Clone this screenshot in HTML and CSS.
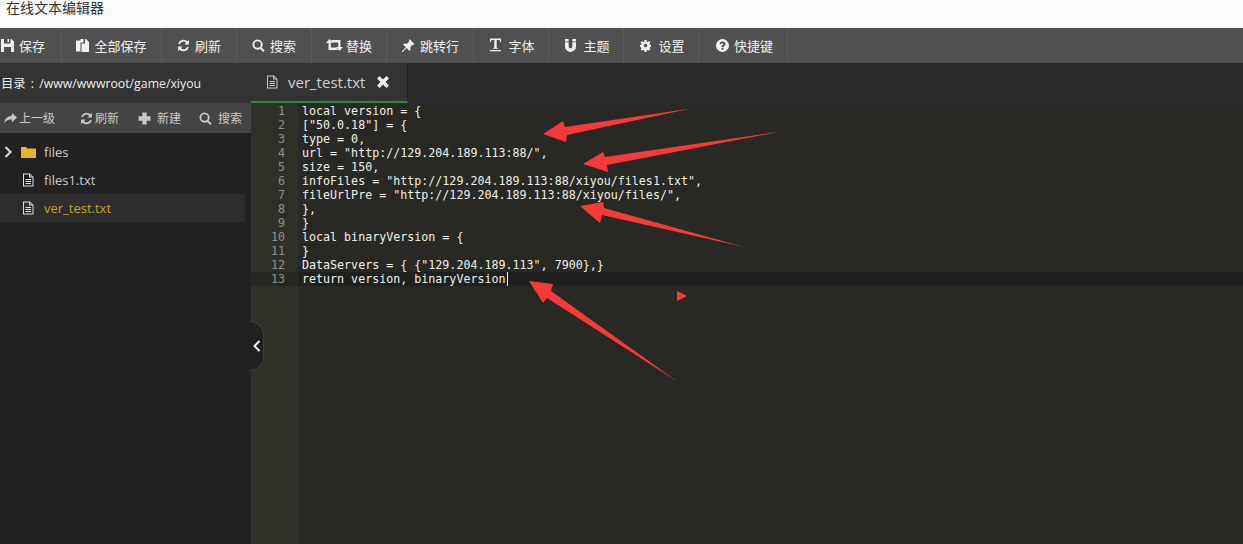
FILE: index.html
```html
<!DOCTYPE html>
<html lang="zh-CN">
<head>
<meta charset="utf-8">
<title>在线文本编辑器</title>
<link rel="stylesheet" href="styles.css">
</head>
<body>
<svg width="0" height="0" class="defs">
  <symbol id="i-file" viewBox="0 0 12 14"><path d="M1 .5h7l3.500 3.500v9.500h-10.500z M2 1.500v11h8.500v-8h-3.500v-3z M8 1.800v1.700h1.700z M3.500 6h5.500v1h-5.500z M3.500 8h5.500v1h-5.500z M3.500 10h5.500v1h-5.500z" fill-rule="evenodd"/></symbol>
  <symbol id="i-refresh" viewBox="0 0 14 14"><path d="M12.800 1v4.800h-4.800l1.800-1.800a4 4 0 0 0-6.600 1.500h-2a6 6 0 0 1 10-3.100z M1.200 13v-4.800h4.800l-1.800 1.800a4 4 0 0 0 6.600-1.500h2a6 6 0 0 1-10 3.100z"/></symbol>
  <symbol id="i-search" viewBox="0 0 14 14"><path d="M6 .5a5.500 5.500 0 0 1 4.400 8.700l3.200 3.200-1.500 1.500-3.200-3.200a5.500 5.500 0 1 1-2.900-10.200z M6 2.500a3.500 3.500 0 1 0 0 7 3.500 3.500 0 0 0 0-7z" fill-rule="evenodd"/></symbol>
</svg>

<header class="title">在线文本编辑器</header>

<nav class="toolbar">
  <div class="tool tool-first"><svg class="ico" viewBox="0 0 13 13"><path d="M0 0h10.500l2.500 2.500v10.500h-13z M3 0v4.500h6.500v-4.500h-1.500v3h-1.500v-3z M3 8v5h7v-5z" fill-rule="evenodd"/></svg><span>保存</span></div>
  <div class="tool"><svg class="ico" viewBox="0 0 13 13"><path d="M0 1.500h4.500v-1.500h3v3.500h-3v9h-4.500z M5.500 4.500h3.500v-4.500h1l3 3v10h-7.500z" /></svg><span>全部保存</span></div>
  <div class="tool"><svg class="ico"><use href="#i-refresh"/></svg><span>刷新</span></div>
  <div class="tool"><svg class="ico"><use href="#i-search"/></svg><span>搜索</span></div>
  <div class="tool tool-tight"><svg class="ico ico-retweet" viewBox="0 0 17 12"><path d="M3.500 0l3.500 4h-2.200v4.500h5.200l2 2.500h-9.500v-7h-2.500z M13.500 12l-3.500-4h2.200v-4.500h-5.200l-2-2.500h9.500v7h2.500z"/></svg><span>替换</span></div>
  <div class="tool"><svg class="ico ico-wide" viewBox="0 0 14 14"><path d="M8.500 0l5.500 5.500-1 1-1-.4-2.500 2.500.2 3-1.200 1.200-3-3-4.300 4.200h-.7v-.7l4.200-4.300-3-3 1.200-1.200 3 .2 2.500-2.500-.4-1z"/></svg><span>跳转行</span></div>
  <div class="tool tool-shift"><svg class="ico ico-t" viewBox="0 0 12 14"><path d="M0 0h12v4h-1l-.5-2.500h-3.200v8.500l1.500.4v.8h-5.600v-.8l1.500-.4v-8.500h-3.200l-.5 2.500h-1z M0 12.500h12v1.200h-12z"/></svg><span>字体</span></div>
  <div class="tool tool-shift"><svg class="ico ico-u" viewBox="0 0 12 14"><path d="M0 0h4v2.500h-4z M8 0h4v2.500h-4z M0 3.500h4v4.500a2 2 0 0 0 4 0v-4.500h4v4.500a6 6 0 0 1-12 0z"/></svg><span>主题</span></div>
  <div class="tool tool-shift"><svg class="ico ico-u" viewBox="0 0 12 12"><path d="M5 0h2l.3 1.600 1.200.5 1.400-.9 1.400 1.400-.9 1.400.5 1.200 1.600.3v2l-1.600.3-.5 1.200.9 1.400-1.400 1.400-1.400-.9-1.200.5-.3 1.600h-2l-.3-1.600-1.200-.5-1.400.9-1.400-1.400.9-1.400-.5-1.200-1.600-.3v-2l1.600-.3.5-1.200-.9-1.400 1.400-1.400 1.400.9 1.200-.5z M6 4a2 2 0 1 0 0 4 2 2 0 0 0 0-4z" fill-rule="evenodd"/></svg><span>设置</span></div>
  <div class="tool tool-shift"><svg class="ico ico-q" viewBox="0 0 13 13"><path d="M6.500 0a6.500 6.500 0 1 1 0 13 6.500 6.500 0 0 1 0-13z M5.500 9v1.800h2v-1.800z M6.600 2.500c-1.500 0-2.500.7-3 1.700l1.300 1c.4-.6.800-.9 1.500-.9.600 0 1 .3 1 .8 0 .4-.3.700-.9 1-.8.400-1 1-1 1.600v.5h2v-.3c0-.4.200-.6.800-.9.800-.5 1.200-1 1.200-2 0-1.500-1.300-2.500-2.900-2.500z" fill-rule="evenodd"/></svg><span>快捷键</span></div>
</nav>

<main class="workspace">
  <aside class="sidebar">
    <div class="path">目录 : /www/wwwroot/game/xiyou</div>
    <div class="actions">
      <div class="action action-up"><svg class="act-ico" viewBox="0 0 14 12"><path d="M8.500 0l5.500 5-5.500 5v-3c-3.500 0-6 .5-8 4 0-4.500 3-7.500 8-8z"/></svg><span>上一级</span></div>
      <div class="action action-refresh"><svg class="act-ico"><use href="#i-refresh"/></svg><span>刷新</span></div>
      <div class="action action-gap"><svg class="act-ico" viewBox="0 0 12 12"><path d="M4 .5h4v3.500h3.500v4h-3.500v3.500h-4v-3.500h-3.500v-4h3.500z"/></svg><span>新建</span></div>
      <div class="action action-gap"><svg class="act-ico"><use href="#i-search"/></svg><span>搜索</span></div>
    </div>
    <ul class="tree">
      <li class="node node-folder">
        <svg class="chev" viewBox="0 0 8 12"><path d="M1.500 1l5 5-5 5" fill="none" stroke="#ddd" stroke-width="2"/></svg>
        <svg class="folder" viewBox="0 0 15 12"><path d="M0 1h5l1 1.500h9v9.500h-15z" fill="#e5b52b"/></svg>
        <span>files</span>
      </li>
      <li class="node">
        <svg class="doc"><use href="#i-file"/></svg>
        <span>files1.txt</span>
      </li>
      <li class="node node-active">
        <svg class="doc"><use href="#i-file"/></svg>
        <span>ver_test.txt</span>
      </li>
    </ul>
  </aside>

  <section class="editor">
    <div class="tabs">
      <div class="tab">
        <svg class="tab-doc"><use href="#i-file"/></svg>
        <span>ver_test.txt</span>
        <svg class="tab-close" viewBox="0 0 12 12"><path d="M2.500 0l3.500 3.500 3.500-3.500 2.500 2.500-3.500 3.500 3.500 3.500-2.500 2.500-3.500-3.500-3.500 3.500-2.500-2.500 3.500-3.500-3.500-3.500z"/></svg>
      </div>
    </div>
    <div class="code-view">
      <div class="gutter">
        <div>1</div><div>2</div><div>3</div><div>4</div><div>5</div><div>6</div><div>7</div><div>8</div><div>9</div><div>10</div><div>11</div><div>12</div><div class="line-active">13</div>
      </div>
      <div class="code">
        <div class="line">local version = {</div>
        <div class="line">["50.0.18"] = {</div>
        <div class="line">type = 0,</div>
        <div class="line">url = "http://129.204.189.113:88/",</div>
        <div class="line">size = 150,</div>
        <div class="line">infoFiles = "http://129.204.189.113:88/xiyou/files1.txt",</div>
        <div class="line">fileUrlPre = "http://129.204.189.113:88/xiyou/files/",</div>
        <div class="line">},</div>
        <div class="line">}</div>
        <div class="line">local binaryVersion = {</div>
        <div class="line">}</div>
        <div class="line">DataServers = { {"129.204.189.113", 7900},}</div>
        <div class="line line-active">return version, binaryVersion<i class="caret"></i></div>
      </div>
    </div>
  </section>
</main>

<div class="collapse"><svg viewBox="0 0 8 12" class="collapse-ico"><path d="M6.500 1l-5 5 5 5" fill="none" stroke="#eee" stroke-width="2"/></svg></div>

<svg class="marks" viewBox="0 0 1243 544" width="1243" height="544">
  <path d="M543 134L563 121L565 127L691 108.500L567 135L566 142Z"/>
  <path d="M583 164L603 152L605 157L781 131.500L607 165L608 172Z"/>
  <path d="M580 206L603 202L604 208L744 247L602 215L600 223Z"/>
  <path d="M529 281L553 284L551 291L678 382L547 298L543 303Z"/>
  <path d="M677 291L687 296L677 301Z"/>
</svg>
</body>
</html>
```
FILE: styles.css
```css
* { box-sizing: border-box; }
html, body { margin: 0; height: 544px; overflow: hidden; }
body {
  position: relative;
  display: flex;
  flex-direction: column;
  background: #2a2a2a;
  font-family: "Open Sans", "Noto Sans CJK SC", sans-serif;
  font-size: 13px;
}
.defs { position: absolute; }
svg { fill: currentColor; flex: none; display: block; }

.title {
  height: 28px;
  flex: none;
  padding: 0 0 0 6px;
  background: #fbfbfb;
  color: #333;
  font-size: 14px;
  line-height: 16px;
}

.toolbar {
  height: 35px;
  flex: none;
  display: grid;
  grid-template-columns: 62px 100px 75px 75px 75px 87px 75px 75px 75px 89px;
  justify-content: start;
  background: #505050;
  color: #f0f0f0;
}
.tool {
  display: flex;
  align-items: center;
  justify-content: center;
  gap: 5px;
  border-right: 1px solid #5c5c5c;
  line-height: 37px;
}
.tool-first { justify-content: flex-start; padding-left: 1px; }
.tool-tight { gap: 3px; }
.tool-shift { padding-left: 3px; }
.ico { width: 13px; height: 13px; margin-top: -3px; }
.ico-wide { width: 14px; }
.ico-retweet { width: 17px; height: 12px; }
.ico-t { width: 11px; height: 14px; margin-right: 2px; }
.ico-u { width: 11px; height: 13px; margin-right: 2px; }
.ico-q { margin-right: 0; }

.workspace { flex: 1; display: flex; min-height: 0; }

.sidebar {
  width: 251px;
  flex: none;
  display: flex;
  flex-direction: column;
  background: #212121;
  color: #ddd;
}
.path {
  height: 40px;
  flex: none;
  padding-left: 1px;
  background: #333;
  color: #eee;
  font-size: 12.300px;
  word-spacing: 2px;
  line-height: 42px;
}
.actions {
  height: 30px;
  flex: none;
  display: flex;
  align-items: center;
  padding: 0 0 0 4px;
  background: #444;
  color: #c8c8c8;
  font-size: 12px;
}
.action { display: flex; align-items: center; gap: 2px; margin-right: 25px; }
.action-refresh { margin-right: 19px; }
.action-gap { gap: 6px; margin-right: 18px; }
.action:last-child { margin-right: 0; }
.act-ico { width: 13px; height: 13px; }

.tree { margin: 5px 0 0; padding: 0; list-style: none; }
.node {
  position: relative;
  display: flex;
  align-items: center;
  width: 245px;
  height: 28px;
  padding-left: 21px;
  gap: 9px;
  color: #ccc;
  font-size: 13px;
}
.node-folder { gap: 8px; }
.node-active { background: #2d2d2d; color: #c8a21c; }
.chev { position: absolute; left: 4px; top: 8px; width: 8px; height: 12px; }
.folder { width: 15px; height: 12px; }
.doc { width: 12px; height: 14px; margin: 0 1px; color: #ddd; }

.editor { flex: 1; display: flex; flex-direction: column; min-width: 0; }
.tabs { height: 40px; flex: none; background: #2a2a2a; }
.tab {
  display: flex;
  align-items: center;
  width: 157px;
  height: 40px;
  padding-left: 15px;
  background: #333;
  border-bottom: 2px solid #2f8a46;
  border-right: 1px solid #222;
  color: #d0d0d0;
  font-size: 15px;
}
.tab-doc { width: 12px; height: 14px; margin-right: 10px; color: #c8c8c8; }
.tab-close { width: 12px; height: 12px; margin-left: 12px; color: #eee; }

.code-view { flex: 1; display: flex; min-height: 0; background: #282824; }
.gutter {
  width: 47px;
  flex: none;
  padding-top: 1px;
  background: #2f3129;
  color: #8f908a;
  font-family: "DejaVu Sans Mono", monospace;
  font-size: 11.670px;
  line-height: 14px;
  text-align: right;
}
.gutter > div { padding-right: 13px; }
.gutter > .line-active { background: #272822; }
.code {
  flex: 1;
  min-width: 0;
  padding-top: 1px;
  color: #f0f0e8;
  font-family: "DejaVu Sans Mono", monospace;
  font-size: 11.670px;
  line-height: 14px;
}
.line { padding-left: 4px; height: 14px; white-space: pre; }
.line-active { background: #202020; }
.caret {
  display: inline-block;
  width: 1px;
  height: 14px;
  background: #f8f8f0;
  vertical-align: top;
  margin-left: 1px;
}

.collapse {
  position: absolute;
  left: 250px;
  top: 321px;
  width: 14px;
  height: 50px;
  display: flex;
  align-items: center;
  justify-content: center;
  background: #212121;
  border: 1px solid #3c3c3c;
  border-left: 0;
  border-radius: 0 14px 14px 0;
}
.collapse-ico { width: 8px; height: 12px; }

.marks { position: absolute; left: 0; top: 0; fill: #f63a3a; pointer-events: none; }
```
